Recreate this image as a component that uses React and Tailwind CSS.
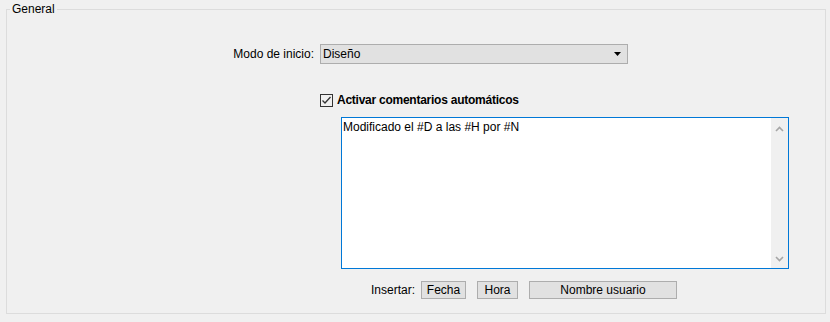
import React from "react";

const Chevron = ({ up }) => (
    <svg width="9" height="6" viewBox="0 0 9 6" className="block">
        <path
            d={up ? "M1 5 L4.5 1.5 L8 5" : "M1 1 L4.5 4.5 L8 1"}
            fill="none"
            stroke="#a6a6a6"
            strokeWidth="1.6"
        />
    </svg>
);

const Button = ({ label, width }) => (
    <div
        className={`h-[18px] border border-[#adadad] bg-[#e1e1e1] flex items-center justify-center box-border ${width}`}
    >
        {label}
    </div>
);

const App = () => {
    return (
        <div
            className="w-[830px] h-[322px] bg-[#f0f0f0] text-black text-[12px] pt-px overflow-hidden"
            style={{ fontFamily: '"Liberation Sans", Arial, sans-serif' }}
        >
            <fieldset className="ml-[6px] w-[820px] h-[313px] border border-[#dcdcdc] box-border">
                <legend className="ml-[3px] px-[2px] leading-[16px]">General</legend>

                {/* Modo de inicio */}
                <div className="flex items-center mt-[27px]">
                    <div className="w-[313px] pr-[6px] text-right">Modo de inicio:</div>
                    <div className="w-[308px] h-[20px] border border-[#adadad] bg-[#e1e1e1] flex items-center justify-between pl-[2px] pr-[6px] box-border">
                        <span>Diseño</span>
                        <svg width="7" height="4" viewBox="0 0 7 4">
                            <path d="M0 0 L7 0 L3.5 4 Z" fill="#000" />
                        </svg>
                    </div>
                </div>

                {/* Checkbox */}
                <div className="flex items-center h-[16px] mt-[28px] ml-[313px]">
                    <div className="w-[13px] h-[13px] border border-[#333] bg-[#f0f0f0] flex items-center justify-center box-border">
                        <svg width="11" height="11" viewBox="0 0 11 11">
                            <path d="M1.5 5.5 L4 8 L9.5 2" fill="none" stroke="#333" strokeWidth="1.3" />
                        </svg>
                    </div>
                    <span className="ml-[4px] font-bold tracking-[-0.25px]">Activar comentarios automáticos</span>
                </div>

                {/* Textarea */}
                <div className="mt-[9px] ml-[334px] w-[448px] h-[152px] border border-[#0078d7] bg-white flex box-border">
                    <div className="flex-1 pl-[1px] pt-[2px] leading-[15px]">
                        Modificado el #D a las #H por #N
                    </div>
                    <div className="w-[17px] bg-[#f0f0f0] flex flex-col items-center justify-between pt-[8px] pb-[6px]">
                        <Chevron up />
                        <Chevron />
                    </div>
                </div>

                {/* Insertar */}
                <div className="flex items-center mt-[12px] ml-[364px]">
                    <span className="w-[50px] shrink-0">Insertar:</span>
                    <Button label="Fecha" width="w-[45px]" />
                    <div className="w-[11px]" />
                    <Button label="Hora" width="w-[41px]" />
                    <div className="w-[11px]" />
                    <Button label="Nombre usuario" width="w-[148px]" />
                </div>
            </fieldset>
        </div>
    );
};

export default App;
